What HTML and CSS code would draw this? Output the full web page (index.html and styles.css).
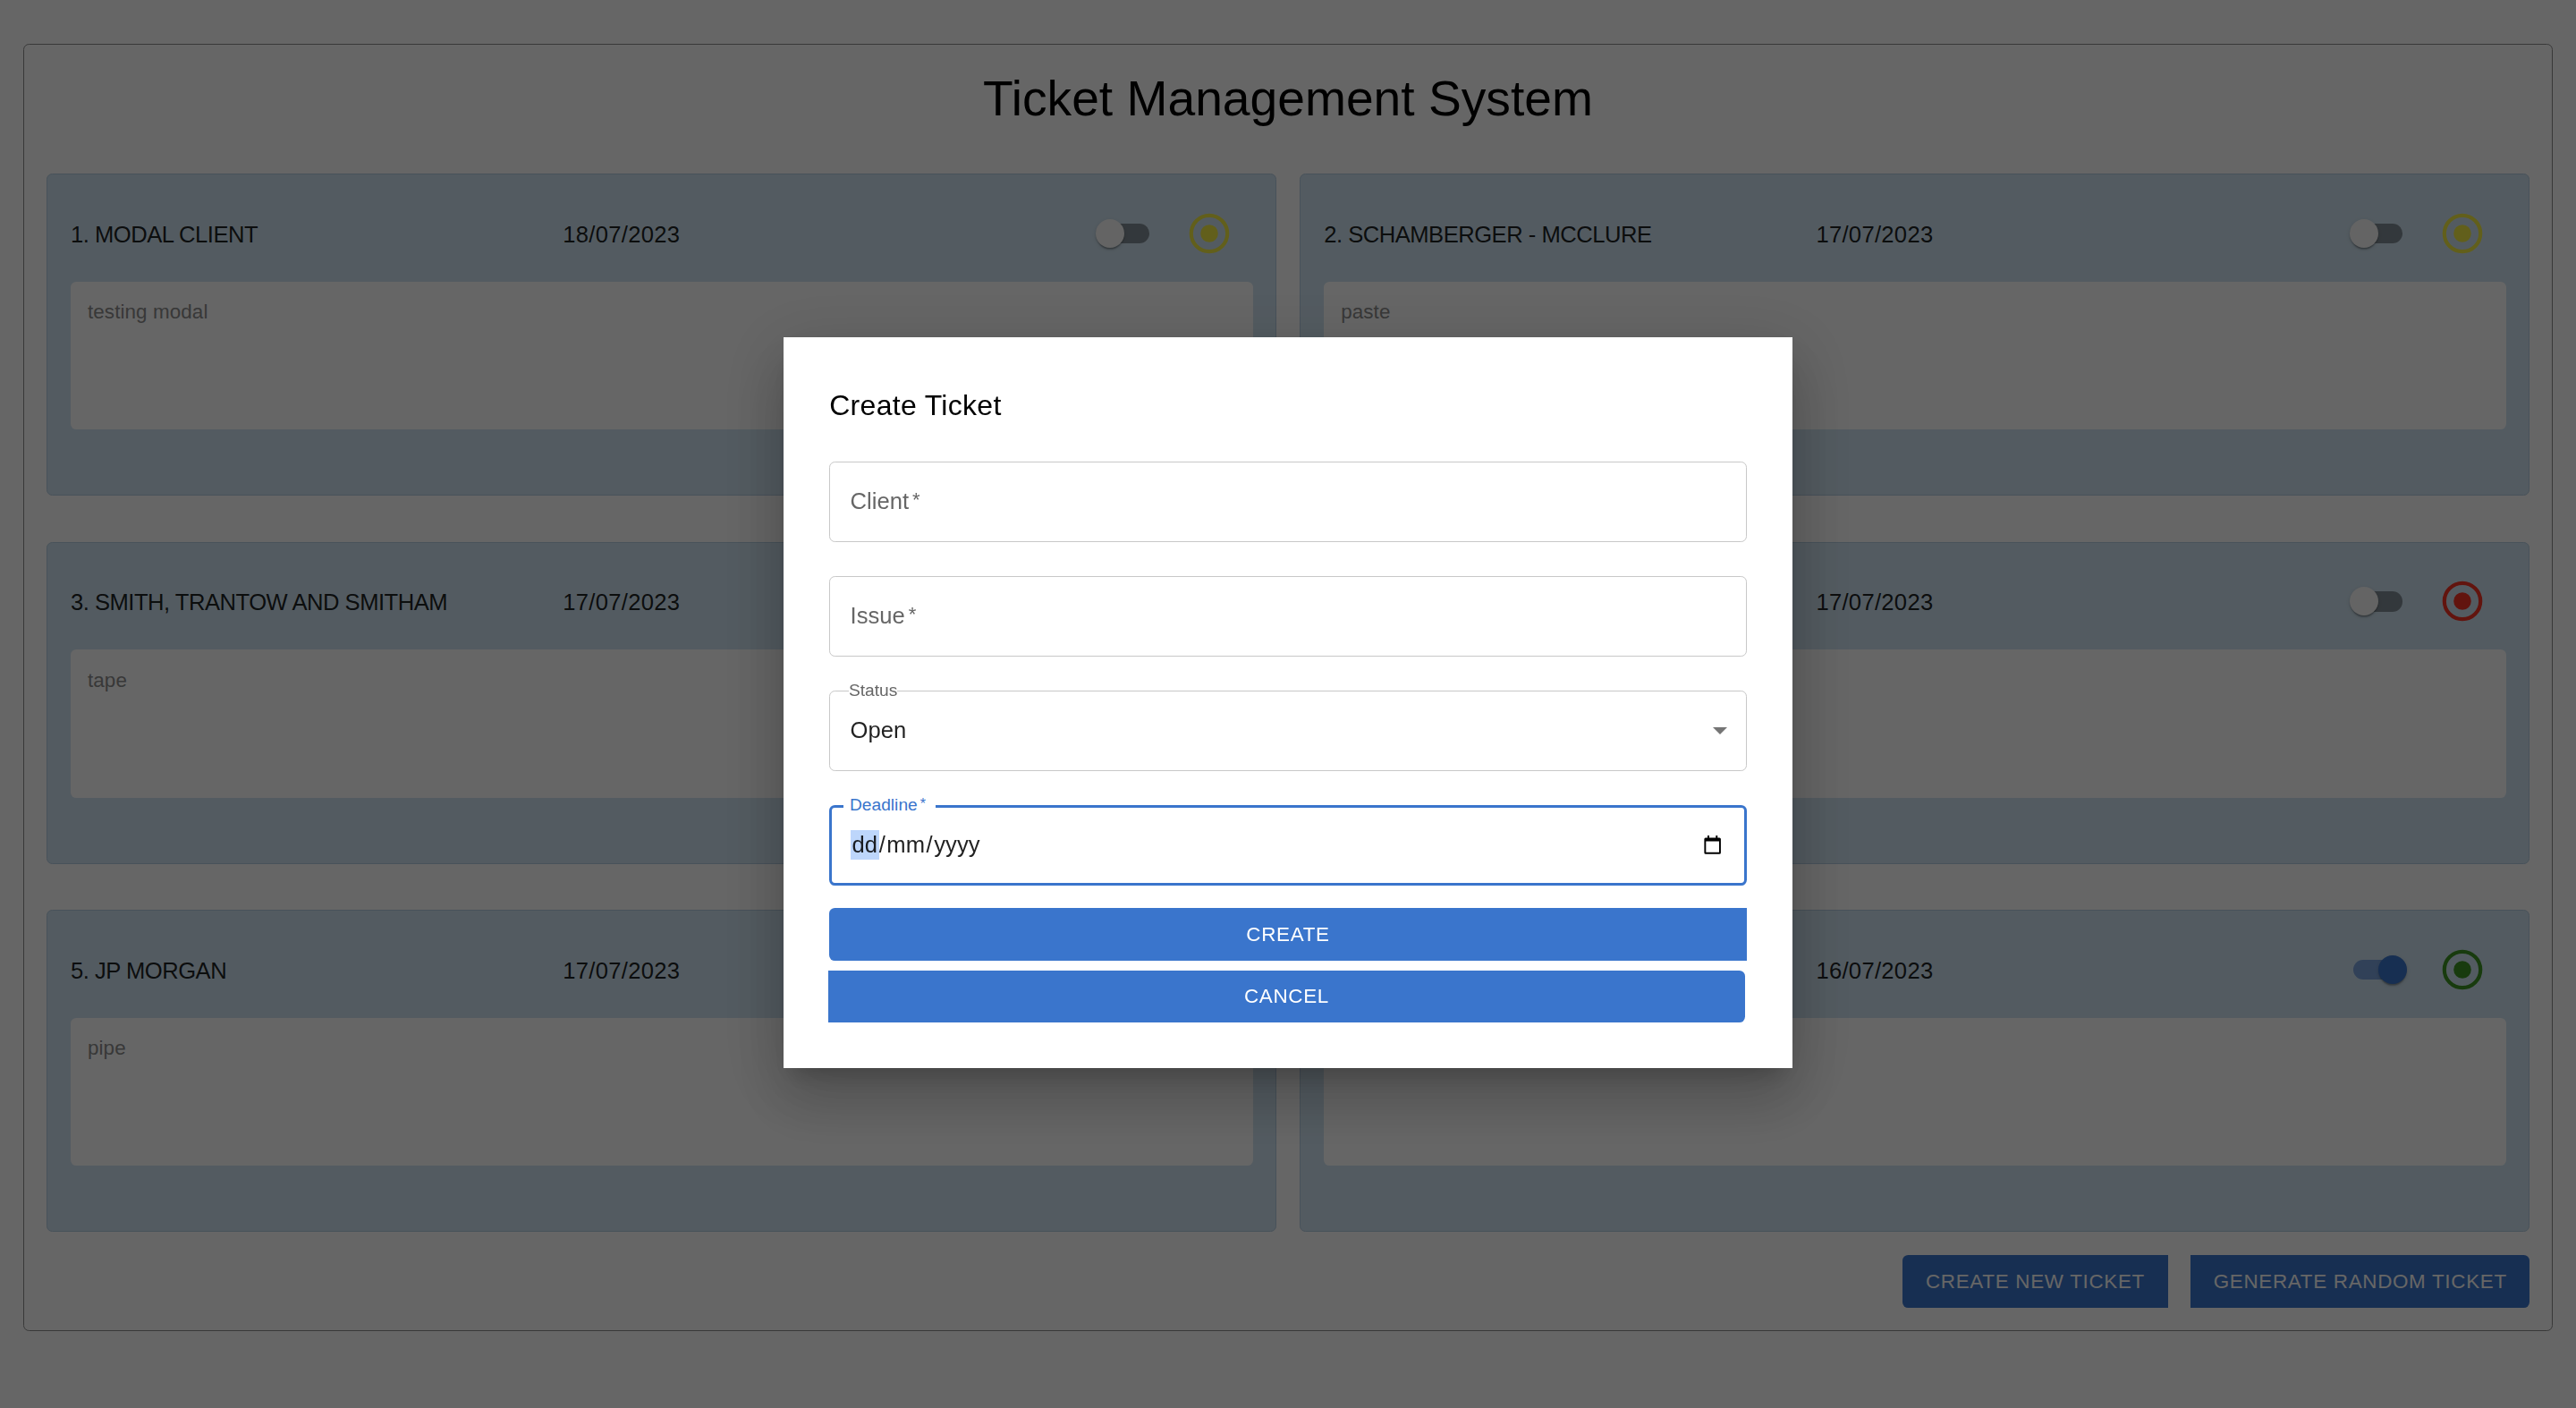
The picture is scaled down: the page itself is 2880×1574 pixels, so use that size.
FILE: index.html
```html
<!DOCTYPE html>
<html lang="en">
<head>
<meta charset="utf-8">
<title>Ticket Management System</title>
<link rel="stylesheet" href="styles.css">
</head>
<body>
<main class="frame">
  <h1 class="page-title">Ticket Management System</h1>
  <section class="grid">
    <article class="card">
      <header class="card-head">
        <span class="card-title">1. MODAL CLIENT</span><span class="card-date">18/07/2023</span>
        <span class="switch"><span class="thumb"></span></span>
        <svg class="status yellow" viewBox="0 0 54 54"><circle cx="27" cy="27" r="20.2"/><circle class="dot" cx="27" cy="27" r="9.8"/></svg>
      </header>
      <div class="issue">testing modal</div>
    </article>
    <article class="card">
      <header class="card-head">
        <span class="card-title">2. SCHAMBERGER - MCCLURE</span><span class="card-date">17/07/2023</span>
        <span class="switch"><span class="thumb"></span></span>
        <svg class="status yellow" viewBox="0 0 54 54"><circle cx="27" cy="27" r="20.2"/><circle class="dot" cx="27" cy="27" r="9.8"/></svg>
      </header>
      <div class="issue">paste</div>
    </article>
    <article class="card">
      <header class="card-head">
        <span class="card-title">3. SMITH, TRANTOW AND SMITHAM</span><span class="card-date">17/07/2023</span>
        <span class="switch"><span class="thumb"></span></span>
        <svg class="status yellow" viewBox="0 0 54 54"><circle cx="27" cy="27" r="20.2"/><circle class="dot" cx="27" cy="27" r="9.8"/></svg>
      </header>
      <div class="issue">tape</div>
    </article>
    <article class="card">
      <header class="card-head">
        <span class="card-title">4.</span><span class="card-date">17/07/2023</span>
        <span class="switch"><span class="thumb"></span></span>
        <svg class="status red" viewBox="0 0 54 54"><circle cx="27" cy="27" r="20.2"/><circle class="dot" cx="27" cy="27" r="9.8"/></svg>
      </header>
      <div class="issue"></div>
    </article>
    <article class="card">
      <header class="card-head">
        <span class="card-title">5. JP MORGAN</span><span class="card-date">17/07/2023</span>
        <span class="switch"><span class="thumb"></span></span>
        <svg class="status yellow" viewBox="0 0 54 54"><circle cx="27" cy="27" r="20.2"/><circle class="dot" cx="27" cy="27" r="9.8"/></svg>
      </header>
      <div class="issue">pipe</div>
    </article>
    <article class="card">
      <header class="card-head">
        <span class="card-title">6.</span><span class="card-date">16/07/2023</span>
        <span class="switch on"><span class="thumb"></span></span>
        <svg class="status green" viewBox="0 0 54 54"><circle cx="27" cy="27" r="20.2"/><circle class="dot" cx="27" cy="27" r="9.8"/></svg>
      </header>
      <div class="issue"></div>
    </article>
  </section>
  <div class="actions">
    <button class="btn btn-left" type="button">Create new ticket</button>
    <button class="btn btn-right" type="button">Generate random ticket</button>
  </div>
</main>

<div class="overlay">
  <form class="modal">
    <h2 class="modal-title">Create Ticket</h2>
    <div class="field"><span class="placeholder">Client<i class="req">*</i></span></div>
    <div class="field"><span class="placeholder">Issue<i class="req">*</i></span></div>
    <div class="field">
      <span class="legend">Status</span>
      <span class="value">Open</span>
      <svg class="caret" viewBox="0 0 16 8"><path d="M0 0h16l-8 8z"/></svg>
    </div>
    <div class="field focused">
      <span class="legend notch">Deadline<i class="req">*</i></span>
      <span class="value date"><span class="seg selected">dd</span>/<span class="seg">mm</span>/<span class="seg">yyyy</span></span>
      <svg class="calendar" viewBox="0 0 20 22"><path d="M4.2 0h2v2.6h7.6V0h2v2.6H18a1.6 1.6 0 0 1 1.6 1.6v15.6A1.6 1.6 0 0 1 18 21.4H2A1.6 1.6 0 0 1 .4 19.8V4.2A1.6 1.6 0 0 1 2 2.6h2.2zM2.4 6.8v12.6h15.2V6.8z"/></svg>
    </div>
    <button class="btn wide btn-left create" type="button">Create</button>
    <button class="btn wide btn-right cancel" type="button">Cancel</button>
  </form>
</div>
</body>
</html>
```

FILE: styles.css
```css
* { box-sizing: border-box; }
html, body { margin: 0; height: 100%; }
body {
  background: #fff;
  color: rgba(0, 0, 0, .87);
  font-family: "Liberation Sans", Arial, sans-serif;
  font-size: 25.6px;
  overflow: hidden;
}
.frame {
  margin: 49px 25.6px 0;
  height: 1438.5px;
  border: 1.6px solid #909090;
  border-radius: 6.4px;
  padding: 0 25px;
  display: flex;
  flex-direction: column;
}
.page-title {
  margin: 0;
  height: 144.4px;
  line-height: 120px;
  font-size: 55.2px;
  font-weight: 400;
  text-align: center;
  color: #000;
}
.grid {
  display: grid;
  grid-template-columns: 1fr 1fr;
  column-gap: 25.6px;
  row-gap: 51.5px;
}
.card {
  height: 360px;
  background: #d0e4f2;
  border: 1.6px solid #b4cce0;
  border-radius: 6.4px;
  padding: 25.6px 25.6px 0 26.4px;
}
.card-head {
  height: 80px;
  margin-bottom: 13.8px;
  display: flex;
  align-items: center;
}
.card-title { flex: 0 0 550.2px; white-space: nowrap; letter-spacing: -.5px; padding-top: 3px; }
.card-date { flex: 1 1 auto; letter-spacing: .3px; padding-top: 3px; }
.switch {
  position: relative;
  flex: none;
  width: 54.4px;
  height: 22.4px;
  border-radius: 11.2px;
  background: rgba(0, 0, 0, .38);
  margin-right: 40.5px;
}
.thumb {
  position: absolute;
  left: -4.8px;
  top: -4.8px;
  width: 32px;
  height: 32px;
  border-radius: 50%;
  background: #fafafa;
  box-shadow: 0 3.2px 1.6px -1.6px rgba(0,0,0,.2), 0 1.6px 1.6px rgba(0,0,0,.14), 0 1.6px 4.8px rgba(0,0,0,.12);
}
.switch.on { background: #7ba3dc; }
.switch.on .thumb { left: 27.2px; background: #3a75cc; }
.status {
  flex: none;
  width: 54px;
  height: 54px;
  margin-right: 21.5px;
  fill: none;
  stroke-width: 4.2;
}
.status .dot { stroke: none; }
.yellow { stroke: #f4ee44; }
.yellow .dot { fill: #f4ee44; }
.red { stroke: #f53424; }
.red .dot { fill: #f53424; }
.green { stroke: #3e9424; }
.green .dot { fill: #3e9424; }
.issue {
  height: 165.7px;
  background: #fff;
  border-radius: 6.4px;
  padding: 22.5px 19px 0;
  font-size: 22.4px;
  line-height: 1.1;
  letter-spacing: .1px;
  color: #8c8c8c;
}
.actions {
  margin-top: 25.6px;
  display: flex;
  justify-content: flex-end;
  gap: 25.6px;
}
.btn {
  height: 58.7px;
  padding: 1px 25.6px 0;
  border: 0;
  background: #3a75cc;
  color: #fff;
  font-family: inherit;
  font-size: 22.4px;
  letter-spacing: .7px;
  text-transform: uppercase;
}
.btn-left { border-radius: 6.4px 0 0 6.4px; }
.btn-right { border-radius: 0 6.4px 6.4px 0; }
.overlay {
  position: fixed;
  inset: 0;
  background: rgba(0, 0, 0, .6);
}
.modal {
  position: absolute;
  left: 876px;
  top: 377.3px;
  width: 1128px;
  height: 816.7px;
  padding: 51.2px;
  background: #fff;
  display: flex;
  flex-direction: column;
  box-shadow: 0 17.6px 24px -11.2px rgba(0,0,0,.2), 0 38.4px 60.8px 4.8px rgba(0,0,0,.14), 0 14.4px 73.6px 12.8px rgba(0,0,0,.12);
}
.modal-title {
  margin: 0 0 39.5px;
  height: 48px;
  font-size: 32px;
  font-weight: 400;
  line-height: 51px;
  letter-spacing: .3px;
  color: #000;
}
.field {
  position: relative;
  flex: none;
  height: 89.6px;
  margin-bottom: 38.4px;
  padding: 0 22.4px;
  border: 1.6px solid #c8c8c8;
  border-radius: 6.4px;
  display: flex;
  align-items: center;
  justify-content: space-between;
}
.field.focused {
  border: 3.2px solid #3a75cc;
  margin-bottom: 25px;
  padding: 0 20.8px;
}
.placeholder { color: #666; }
.req { font-style: normal; margin-left: 4px; font-size: 22px; vertical-align: 3px; }
.legend {
  position: absolute;
  left: 20.8px;
  top: -11.5px;
  background: #fff;
  font-size: 19.2px;
  line-height: 22px;
  color: #666;
}
.legend.notch {
  left: 12.8px;
  top: -14.7px;
  padding: 0 11.5px 0 7px;
  color: #3a75cc;
}
.legend .req { font-size: 16px; margin-left: 3px; vertical-align: 2px; }
.caret { width: 16px; height: 8px; fill: #757575; margin-right: -1.6px; }
.date { white-space: pre; }
.seg { padding: 0 1.6px; }
.selected { background: #bdd6fb; display: inline-block; line-height: 32.7px; }
.calendar { width: 19.3px; height: 21.3px; fill: #000; margin-right: 5px; }
.wide { flex: none; width: 100%; padding: 1px 0 0; }
.create { height: 59.3px; margin-bottom: 11px; }
.cancel { height: 58px; margin-left: -1.6px; }
```
